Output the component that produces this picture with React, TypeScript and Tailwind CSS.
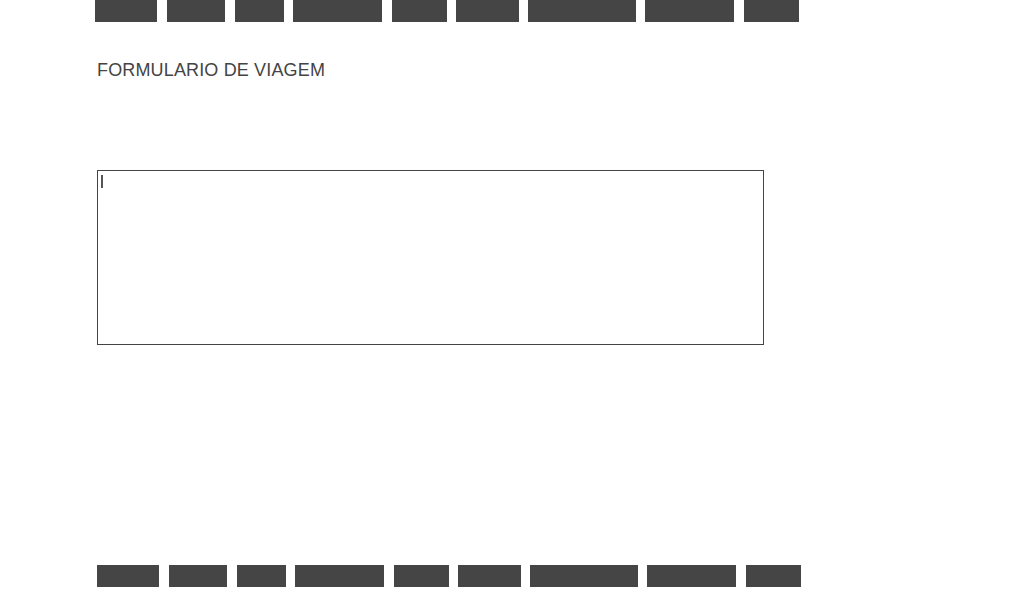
const navItems = [
  { w: 62, gap: 0 },
  { w: 58, gap: 10 },
  { w: 49, gap: 10 },
  { w: 89, gap: 9 },
  { w: 55, gap: 10 },
  { w: 63, gap: 9 },
  { w: 108, gap: 9 },
  { w: 89, gap: 9 },
  { w: 55, gap: 10 },
]

function NavBar({ className }: { className: string }) {
  return (
    <div className={`flex ${className}`}>
      {navItems.map((n, i) => (
        <div key={i} className="h-[22px] bg-[#454545] shrink-0" style={{ width: n.w, marginLeft: n.gap }} />
      ))}
    </div>
  )
}

export default function App() {
  return (
    <div className="w-[1024px] h-[600px] bg-white overflow-hidden font-['Liberation_Sans',Arial,sans-serif]">
      <NavBar className="ml-[95px]" />
      <h1 className="ml-[97px] mt-[37px] text-[18px] leading-[22px] text-[#444] font-normal tracking-[0.15px]">
        FORMULARIO DE VIAGEM
      </h1>
      <div className="ml-[97px] mt-[89px] w-[667px] h-[175px] border border-[#444] px-[3px] pt-[4px]">
        <div className="w-[2px] h-[13px] bg-[#555]" />
      </div>
      <NavBar className="ml-[97px] mt-[220px]" />
    </div>
  )
}
